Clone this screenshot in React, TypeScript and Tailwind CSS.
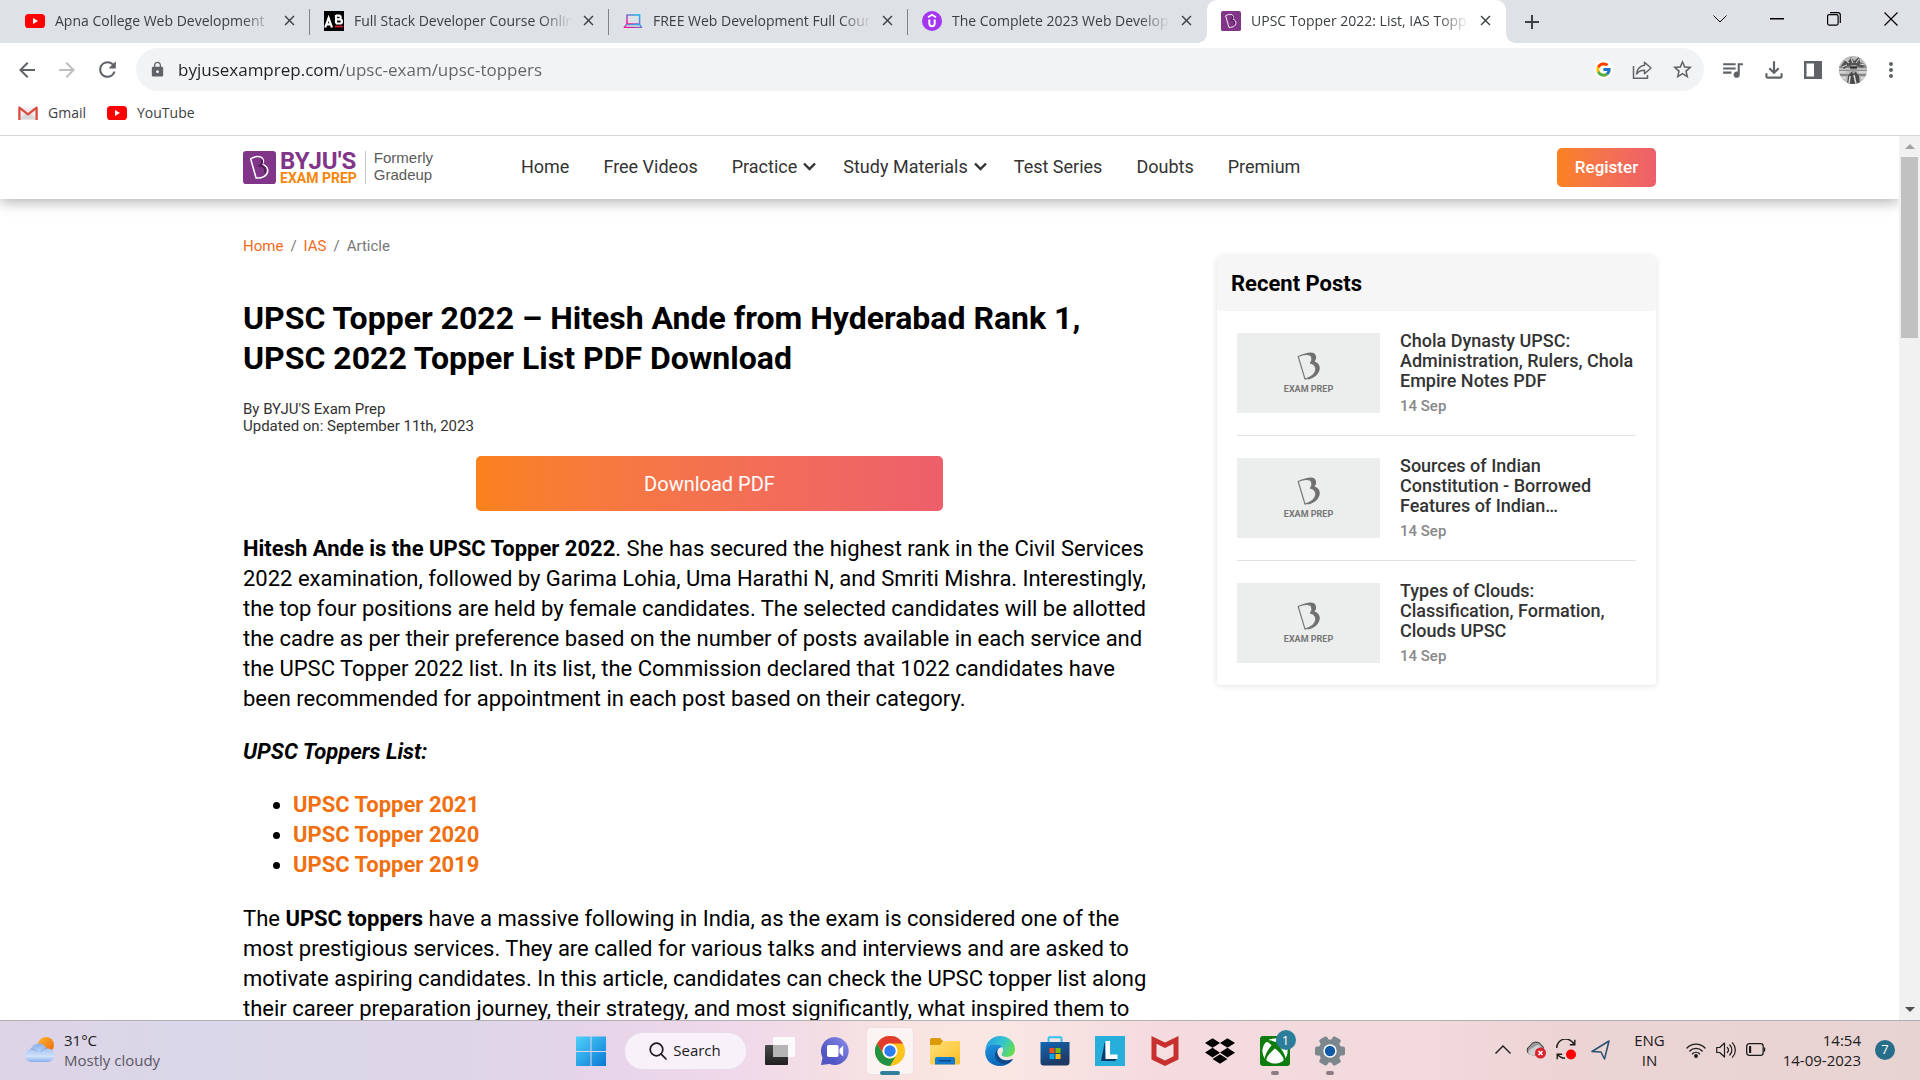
import React from "react";
import { FaXbox, FaDropbox } from "react-icons/fa";
import { FcGoogle } from "react-icons/fc";
import {
  MdArrowBack,
  MdArrowForward,
  MdRefresh,
  MdLock,
  MdStarBorder,
  MdQueueMusic,
  MdOutlineFileDownload,
  MdMoreVert,
  MdClose,
  MdAdd,
} from "react-icons/md";

/* ---------- icons ---------- */

function YouTubeIcon() {
  return (
    <svg width="20" height="20" viewBox="0 0 20 20" aria-hidden="true">
      <rect x="0" y="3" width="20" height="14" rx="3.6" fill="#ff0000" />
      <path d="M8 7v6l5-3z" fill="#fff" />
    </svg>
  );
}

function AppBreweryIcon() {
  return (
    <svg width="20" height="20" viewBox="0 0 20 20" aria-hidden="true">
      <rect width="20" height="20" fill="#000" />
      <path d="M1.2 16.500 4.600 7l3.400 9.500M2.600 13.400h4" fill="none" stroke="#fff" strokeWidth="2.200" />
      <path
        d="M12 4v8.600M12 4.600h3.300a1.900 1.900 0 0 1 0 3.700H12M12 8.300h3.800a2.100 2.100 0 0 1 0 4.200H12"
        fill="none"
        stroke="#fff"
        strokeWidth="2.200"
      />
      <path d="M11 14.600h8v1.800h-8z" fill="#d0202c" />
    </svg>
  );
}

function LaptopIcon() {
  return (
    <svg width="20" height="20" viewBox="0 0 20 20" fill="none" aria-hidden="true">
      <defs>
        <linearGradient id="laptop" x1="0" y1="1" x2="1" y2="0">
          <stop offset="0.1" stopColor="#f0128c" />
          <stop offset="0.5" stopColor="#7a6fd0" />
          <stop offset="1" stopColor="#12b6f0" />
        </linearGradient>
      </defs>
      <rect x="4" y="4" width="12.6" height="9" stroke="url(#laptop)" strokeWidth="1.5" />
      <path d="M3.4 13.6 1.3 16.4h17.4l-2-2.8z" stroke="url(#laptop)" strokeWidth="1.4" strokeLinejoin="round" />
    </svg>
  );
}

function UdemyIcon() {
  return (
    <svg width="20" height="20" viewBox="0 0 20 20" fill="none" stroke="#fff" aria-hidden="true">
      <circle cx="10" cy="10" r="10" fill="#a435f0" stroke="none" />
      <path d="M6 6.2 10 3.8l4 2.4" strokeWidth="1.9" />
      <path d="M7.3 8.4v4.2a2.7 2.7 0 0 0 5.4 0V8.4" strokeWidth="2" />
    </svg>
  );
}

const B_OUTLINE = "M7.4 7.6c4-2.6 9.4-3.2 11.4-.6 1.5 2 .9 4.6-.5 6.2 3.6.4 6 3.2 5.6 6.6-.5 4.4-5.400 6.800-11.200 6.400z";

function ByjusIcon({ size }: { size: number }) {
  return (
    <svg width={size} height={size} viewBox="0 0 32 32" aria-hidden="true">
      <rect width="32" height="32" rx="3" fill="#813588" />
      <path d={B_OUTLINE} fill="#813588" stroke="#fff" strokeWidth="1.5" strokeLinejoin="round" />
      <path
        d="M17.600 8c1.800 2 1 4.500-1 6.200 4.200.2 6 3.400 4.600 7"
        fill="none"
        stroke="#4f1c56"
        strokeWidth="2"
      />
    </svg>
  );
}

function GmailIcon() {
  return (
    <svg width="20" height="20" viewBox="0 0 20 20" aria-hidden="true">
      <path d="M1.500 4.500h17v12h-17z" fill="#ececec" />
      <path d="M1.500 16.500 8 10l2 1.500 2-1.500 6.500 6.500z" fill="#d8d8d8" />
      <path d="M1.400 17V4.600L10 11.400l8.600-6.800V17" fill="none" stroke="#dc4b3e" strokeWidth="2.300" strokeLinejoin="round" />
    </svg>
  );
}

function ShareIcon() {
  return (
    <svg width="22" height="22" viewBox="0 0 22 22" fill="none" stroke="#5f6368" strokeWidth="1.500" strokeLinejoin="round" aria-hidden="true">
      <path d="M2.500 7v12.300h14V16" />
      <path d="M13.500 3.200 20 9l-6.500 5.800v-3.500c-3.600 0-6 1-8 3.700.500-4.200 3-8 8-8.700z" />
    </svg>
  );
}

function SidePanelIcon() {
  return (
    <svg width="20" height="20" viewBox="0 0 20 20" aria-hidden="true">
      <path d="M1 1h18v18H1z" fill="#5f6368" />
      <path d="M3.500 3.500H11v13H3.500z" fill="#fff" />
    </svg>
  );
}

function Avatar() {
  return (
    <svg width="28" height="28" viewBox="0 0 28 28" aria-hidden="true">
      <defs>
        <clipPath id="face">
          <circle cx="14" cy="14" r="14" />
        </clipPath>
      </defs>
      <g clipPath="url(#face)">
        <path d="M0 0h28v28H0z" fill="#bdbdbd" />
        <path d="M0 10h28v2H0zM0 14h28v1H0zM0 18h28v2H0z" fill="#8a8a8a" />
        <path d="m2 10 4-6 3 2 3-5 3 4 5-4 1 5 6 3-4 3-5-2-4 2-5-2-4 3z" fill="#565656" />
        <path d="m5 3 5 4M12 2l2 5M20 3l-3 4M8 9l-5 2M21 8l5 1" stroke="#ddd" strokeWidth="1" />
        <path d="m8 28 1-8 3-4h5l3 4 1 8z" fill="#4a4a4a" />
        <path d="M11.500 9h6v6l-3 3-3-3z" fill="#9c9c9c" />
        <path d="M11 10.500h7v2h-7z" fill="#2a2a2a" />
        <path d="M1 16h6M20 16h8M2 22h5M22 22h4" stroke="#eee" strokeWidth="1" />
        <path d="m15 19 2 9M11 20l-1 8" stroke="#ddd" strokeWidth="1.500" />
      </g>
    </svg>
  );
}

function ChevronDown() {
  return (
    <svg width="13" height="9" viewBox="0 0 13 9" fill="none" stroke="#333" strokeWidth="2.400" aria-hidden="true">
      <path d="m1 1.500 5.500 5.500L12 1.500" />
    </svg>
  );
}

function ThumbLogo() {
  return (
    <svg width="26" height="28" viewBox="0 0 26 28" aria-hidden="true">
      <path d="M5.500 3C11-.2 18.500-.6 19.500 3c1.200 2.500.5 5-1 6.500 4 1 6 4.500 5 8.500-1.300 5-6 8.300-11.500 9.500z" fill="#6f6f6f" />
      <path d="M2.200 4.500C8 1.800 14 1.500 15.500 4.500c1 2.500.3 5-1 6.700 4 .8 6 3.800 5.200 7.300-1.200 5-6.200 7.500-10.700 8.600z" fill="#eceeee" stroke="#777" strokeWidth="1.200" strokeLinejoin="round" />
    </svg>
  );
}

function WeatherIcon() {
  return (
    <svg width="32" height="28" viewBox="0 0 32 28" aria-hidden="true">
      <defs>
        <linearGradient id="sun" x1="0" y1="0" x2="1" y2="1">
          <stop offset="0" stopColor="#fcb62a" />
          <stop offset="1" stopColor="#ec6510" />
        </linearGradient>
        <linearGradient id="cloud" x1="0" y1="0" x2="0" y2="1">
          <stop offset="0" stopColor="#8fb0ea" />
          <stop offset="0.700" stopColor="#cfe2fb" />
          <stop offset="1" stopColor="#88aceb" />
        </linearGradient>
      </defs>
      <circle cx="22" cy="9" r="8" fill="url(#sun)" />
      <path d="M7.500 26a6.500 6.500 0 0 1-.8-12.900A8.600 8.600 0 0 1 22.500 12.500 6.800 6.800 0 1 1 24 26z" fill="url(#cloud)" />
      <path d="M6.700 13.100c3-.5 5 .6 6 2.400M17 16c1-2 3-3.500 5.500-3.500" fill="none" stroke="#7fa2e2" strokeWidth="1" />
    </svg>
  );
}

function StartIcon() {
  return (
    <svg width="30" height="30" viewBox="0 0 30 30" aria-hidden="true">
      <defs>
        <linearGradient id="win" x1="0" y1="0" x2="1" y2="1" gradientUnits="objectBoundingBox">
          <stop offset="0" stopColor="#4fd2fb" />
          <stop offset="1" stopColor="#0a78d4" />
        </linearGradient>
      </defs>
      <path d="M0 .5h14.500V15H0zM15.500.5H30V15H15.500zM0 16h14.500v14H0zM15.500 16H30v14H15.500z" fill="url(#win)" />
    </svg>
  );
}

function TaskViewIcon() {
  return (
    <svg width="30" height="30" viewBox="0 0 30 30" aria-hidden="true">
      <defs>
        <linearGradient id="tvd" x1="0" y1="0" x2="0" y2="1">
          <stop offset="0" stopColor="#4a4a4a" />
          <stop offset="1" stopColor="#1f1f1f" />
        </linearGradient>
      </defs>
      <rect x="0" y="9" width="23" height="20" rx="1" fill="url(#tvd)" />
      <rect x="8" y="1" width="22" height="20" rx="1" fill="#fdfdfd" fillOpacity="0.900" />
      <path d="M8 9h15v12H9a1 1 0 0 1-1-1z" fill="#b5b5b5" />
    </svg>
  );
}

function ChatIcon() {
  return (
    <svg width="30" height="30" viewBox="0 0 30 30" aria-hidden="true">
      <defs>
        <linearGradient id="chat" x1="0" y1="1" x2="1" y2="0">
          <stop offset="0.300" stopColor="#5257c4" />
          <stop offset="1" stopColor="#8a8de8" />
        </linearGradient>
      </defs>
      <path d="M15 1a14 14 0 1 1-5.500 27L1 29l1.500-7.500A14 14 0 0 1 15 1z" fill="url(#chat)" />
      <rect x="7" y="9" width="11.500" height="12" rx="1.800" fill="#fff" />
      <path d="m19.500 13 3.700-3.500v11L19.500 17z" fill="#fff" />
    </svg>
  );
}

function ChromeIcon() {
  return (
    <svg width="30" height="30" viewBox="0 0 30 30" aria-hidden="true">
      <circle cx="15" cy="15" r="15" fill="#fcc31c" />
      <path d="M2 7.500A15 15 0 0 1 28 7.500H15a7.500 7.500 0 0 0-6.500 11.200z" fill="#e33b2e" />
      <path d="M2 7.500 8.500 18.800A7.500 7.500 0 0 0 21.500 18.800L15 30A15 15 0 0 1 2 7.500z" fill="#229342" />
      <circle cx="15" cy="15" r="7.500" fill="#fff" />
      <circle cx="15" cy="15" r="5.700" fill="#2f7bf0" />
    </svg>
  );
}

function ExplorerIcon() {
  return (
    <svg width="30" height="28" viewBox="0 0 30 28" aria-hidden="true">
      <defs>
        <linearGradient id="folder" x1="0" y1="0" x2="1" y2="1">
          <stop offset="0" stopColor="#ffe07a" />
          <stop offset="1" stopColor="#fbbf24" />
        </linearGradient>
      </defs>
      <path d="M0 3a2 2 0 0 1 2-2h8l3 3h15v6H0z" fill="#dd9a08" />
      <path d="M0 8h10l3-4h16a1 1 0 0 1 1 1v21a1.500 1.500 0 0 1-1.500 1.500h-27A1.500 1.500 0 0 1 0 26z" fill="url(#folder)" />
      <path d="M5 27.500V22a2 2 0 0 1 2-2h16a2 2 0 0 1 2 2v5.500z" fill="#1279cf" />
      <path d="M9 23.800h12" stroke="#0a3e73" strokeWidth="1.200" />
    </svg>
  );
}

function EdgeIcon() {
  return (
    <svg width="30" height="30" viewBox="0 0 30 30" aria-hidden="true">
      <defs>
        <linearGradient id="edgeTop" x1="0" y1="0.200" x2="1" y2="0.600">
          <stop offset="0" stopColor="#1f9fe0" />
          <stop offset="0.550" stopColor="#35c6d0" />
          <stop offset="1" stopColor="#67dc4b" />
        </linearGradient>
        <linearGradient id="edgeLeft" x1="0" y1="0" x2="0.500" y2="1">
          <stop offset="0" stopColor="#1f96e0" />
          <stop offset="1" stopColor="#0b62b4" />
        </linearGradient>
      </defs>
      <path d="M.5 13C1.500 5.500 7.500 0 15 0c8.500 0 15 6 15 13 0 5-3.500 8-8 8-3.500 0-5.500-1.200-5.500-2.500 0-1 1.500-1.500 1.500-4C18 11 15 8.500 10.500 8.500 5.500 8.500 2 10.500.5 13z" fill="url(#edgeTop)" />
      <path d="M.3 15C.8 10.500 5 8.300 10.500 8.300c3 0 5.500 1 6.700 2.800-3.200.4-5.200 3-5.200 6.400 0 4.500 4.500 8.500 9.500 8.500 2 0 3.500-.5 5.500-1.500-2.700 3.500-7 5.500-12 5.500C6 30-.6 23.500.3 15z" fill="url(#edgeLeft)" />
      <path d="M12.500 13.500c-3 2.500-3.500 8 .5 11.800 4 3.700 10.500 3.700 14.500-1.300.500-.6 0-1.200-.8-.8-5 2.300-10.700 1-13-3-1.300-2.200-1.700-4.800-1.200-6.700z" fill="#0d4a8a" />
    </svg>
  );
}

function StoreIcon() {
  return (
    <svg width="30" height="30" viewBox="0 0 30 30" aria-hidden="true">
      <defs>
        <linearGradient id="store" x1="0" y1="0" x2="0.400" y2="1">
          <stop offset="0" stopColor="#1268b3" />
          <stop offset="1" stopColor="#1e3763" />
        </linearGradient>
      </defs>
      <path d="M8.500 7V2.500a1.200 1.200 0 0 1 1.200-1.200h10.600a1.200 1.200 0 0 1 1.200 1.200V7" fill="none" stroke="#35c1f1" strokeWidth="2" />
      <path d="M.5 6h29v20.500a3 3 0 0 1-3 3h-23a3 3 0 0 1-3-3z" fill="url(#store)" />
      <path d="M9.500 12H14.500v5H9.500z" fill="#f25022" />
      <path d="M15.500 12h5v5h-5z" fill="#7fba00" />
      <path d="M9.500 18h5v5h-5z" fill="#00a4ef" />
      <path d="M15.500 18h5v5h-5z" fill="#ffb900" />
    </svg>
  );
}

function LIcon() {
  return (
    <svg width="30" height="30" viewBox="0 0 30 30" aria-hidden="true">
      <path d="M0 0h30v30H0z" fill="#27aedb" />
      <path d="m10 5-4 20h14l2-2H11z" fill="#0a3d6b" />
      <path d="M10.500 5h4.500v13.500h7.500V23h-12z" fill="#fff" />
    </svg>
  );
}

function McAfeeIcon() {
  return (
    <svg width="28" height="30" viewBox="0 0 28 30" aria-hidden="true">
      <path d="M.5 0 14 6.500 27.500 0v23.500L14 30 .5 23.500z" fill="#c7302f" />
      <path d="M5.500 7.800 14 12l8.500-4.200v12.400L14 24.500l-8.500-4.300z" fill="#f6dfe0" />
    </svg>
  );
}

function GearIcon() {
  return (
    <svg width="30" height="30" viewBox="0 0 30 30" aria-hidden="true">
      <g fill="#7b868d">
        <circle cx="15" cy="15" r="11.500" />
        <rect x="0" y="10.500" width="30" height="9" rx="2" />
        <rect x="0" y="10.500" width="30" height="9" rx="2" transform="rotate(60 15 15)" />
        <rect x="0" y="10.500" width="30" height="9" rx="2" transform="rotate(120 15 15)" />
      </g>
      <circle cx="15" cy="15" r="6.700" fill="#fff" />
      <circle cx="15" cy="15" r="5.200" fill="#0f5ba7" />
    </svg>
  );
}

function XboxTile() {
  return (
    <span className="relative flex size-[30px] items-center justify-center rounded-[3px] bg-[#107c10] text-white">
      <FaXbox size={26} />
      <span className="absolute -top-[6px] left-4 flex size-5 items-center justify-center rounded-full bg-[#2b7d99] text-[13px] leading-5">
        1
      </span>
    </span>
  );
}

/* ---------- browser chrome ---------- */

const tabs: { title: string; icon: React.ReactNode; active?: boolean }[] = [
  { title: "Apna College Web Development", icon: <YouTubeIcon /> },
  { title: "Full Stack Developer Course Online", icon: <AppBreweryIcon /> },
  { title: "FREE Web Development Full Course", icon: <LaptopIcon /> },
  { title: "The Complete 2023 Web Developer", icon: <UdemyIcon /> },
  { title: "UPSC Topper 2022: List, IAS Toppers", icon: <ByjusIcon size={20} />, active: true },
];

function TabStrip() {
  return (
    <div className="flex h-[43px] shrink-0 items-stretch bg-[#dee1e6] pl-[11px]">
      <div role="tablist" className="flex min-w-0 flex-1">
        {tabs.map((t, i) => (
          <div
            key={t.title}
            role="tab"
            aria-selected={!!t.active}
            className={
              "relative flex min-w-0 max-w-[299px] flex-1 items-center pb-[2px] pl-[14px] pr-3 " +
              (t.active ? "rounded-t-[10px] bg-white" : "")
            }
          >
            {t.active && (
              <>
                <span className="absolute -left-[10px] bottom-0 size-[10px] bg-[radial-gradient(circle_at_0_0,transparent_10px,#fff_10px)]" />
                <span className="absolute -right-[10px] bottom-0 size-[10px] bg-[radial-gradient(circle_at_100%_0,transparent_10px,#fff_10px)]" />
              </>
            )}
            <span className="shrink-0">{t.icon}</span>
            <span className="ml-[10px] min-w-0 flex-1 overflow-hidden whitespace-nowrap text-sm text-[#3c4043] [mask-image:linear-gradient(to_right,#000_86%,transparent)]">
              {t.title}
            </span>
            <button aria-label={"Close " + t.title} className="ml-2 shrink-0 text-[#3c4043]">
              <MdClose size={17} />
            </button>
            {i < 3 && <span className="absolute right-0 top-[9px] h-[26px] w-px bg-[#808387]" />}
          </div>
        ))}
        <button aria-label="New tab" className="ml-[14px] text-[#3c4043]">
          <MdAdd size={24} />
        </button>
      </div>
      <div className="flex h-[38px] pr-px text-black">
        <button aria-label="Search tabs" className="flex w-[57px] items-center justify-center">
          <svg width="14" height="8" viewBox="0 0 14 8" fill="none" stroke="currentColor" aria-hidden="true">
            <path d="m.5.5 6.500 6.500L13.500.5" />
          </svg>
        </button>
        <button aria-label="Minimize" className="flex w-[57px] items-center justify-center">
          <svg width="14" height="2" viewBox="0 0 14 2" aria-hidden="true">
            <path d="M0 0h14v1.500H0z" />
          </svg>
        </button>
        <button aria-label="Restore" className="flex w-[57px] items-center justify-center">
          <svg width="14" height="14" viewBox="0 0 14 14" fill="none" stroke="currentColor" strokeWidth="1.200" aria-hidden="true">
            <rect x=".6" y="2.600" width="10.500" height="10.500" rx="1.500" />
            <path d="M3 .6h8a2.200 2.200 0 0 1 2.300 2.200V11" />
          </svg>
        </button>
        <button aria-label="Close window" className="flex w-[57px] items-center justify-center">
          <svg width="14" height="14" viewBox="0 0 14 14" fill="none" stroke="currentColor" strokeWidth="1.200" aria-hidden="true">
            <path d="m.5.5 13 13M13.500.5l-13 13" />
          </svg>
        </button>
      </div>
    </div>
  );
}

function Toolbar() {
  return (
    <div className="flex h-[53px] shrink-0 items-center bg-white pl-[15px] pr-[21px] text-[#5f6368]">
      <div className="flex gap-4 pr-4">
        <button aria-label="Back">
          <MdArrowBack size={24} />
        </button>
        <button aria-label="Forward" className="text-[#bcbec1]">
          <MdArrowForward size={24} />
        </button>
        <button aria-label="Reload">
          <MdRefresh size={25} />
        </button>
      </div>
      <div className="flex h-[43px] flex-1 items-center rounded-full bg-[#f1f3f4] pl-[13px] pr-[10px]">
        <MdLock size={17} className="shrink-0" />
        <input
          aria-label="Address"
          defaultValue="byjusexamprep.com/upsc-exam/upsc-toppers"
          className="ml-3 min-w-0 flex-1 bg-[linear-gradient(90deg,#202124_163px,#5f6368_163px)] bg-clip-text text-[17px] text-transparent outline-none"
        />
        <div className="flex items-center gap-[18px]">
          <button aria-label="Google" className="rounded-full bg-white p-px">
            <FcGoogle size={17} />
          </button>
          <button aria-label="Share">
            <ShareIcon />
          </button>
          <button aria-label="Bookmark">
            <MdStarBorder size={23} />
          </button>
        </div>
      </div>
      <div className="flex items-center gap-4 pl-4">
        <button aria-label="Media">
          <MdQueueMusic size={25} />
        </button>
        <button aria-label="Downloads">
          <MdOutlineFileDownload size={26} />
        </button>
        <button aria-label="Side panel">
          <SidePanelIcon />
        </button>
        <button aria-label="Profile">
          <Avatar />
        </button>
        <button aria-label="Menu" className="flex w-4 justify-center">
          <MdMoreVert size={24} className="shrink-0" />
        </button>
      </div>
    </div>
  );
}

function BookmarksBar() {
  return (
    <div className="flex h-10 shrink-0 items-center gap-[21px] border-b border-[#d5d7da] bg-white pb-[6px] pl-[18px] text-sm text-[#3c4043]">
      <a href="#gmail" className="flex items-center gap-[10px]">
        <GmailIcon />
        Gmail
      </a>
      <a href="#youtube" className="flex items-center gap-[10px]">
        <YouTubeIcon />
        YouTube
      </a>
    </div>
  );
}

/* ---------- web page ---------- */

const nav = [
  { label: "Home" },
  { label: "Free Videos" },
  { label: "Practice", menu: true },
  { label: "Study Materials", menu: true },
  { label: "Test Series" },
  { label: "Doubts" },
  { label: "Premium" },
];

function SiteHeader() {
  return (
    <header className="relative z-10 shrink-0 bg-white shadow-[0_2px_14px_rgba(0,0,0,0.350)]">
      <div className="mx-auto flex h-[63px] max-w-[1413px] items-center">
        <a href="#top" className="flex shrink-0 items-center">
          <ByjusIcon size={33} />
          <span className="ml-1 flex flex-col">
            <span className="text-2xl font-bold leading-5 text-[#813588]">BYJU'S</span>
            <span className="text-sm font-bold leading-[14px] text-[#f7860b]">EXAM PREP</span>
          </span>
          <span className="ml-2 h-[33px] w-px bg-[#c4c4c4]" />
          <span className="ml-2 pb-1 font-['Liberation_Sans',sans-serif] text-[15px] leading-[17px] text-[#5a5a5a]">
            Formerly
            <br />
            Gradeup
          </span>
        </a>
        <nav className="ml-[88px] flex gap-[27px] whitespace-nowrap pb-[2px] text-lg text-[#333]">
          {nav.map((n) =>
            n.menu ? (
              <button key={n.label} className="flex items-center gap-[6px]">
                {n.label}
                <ChevronDown />
              </button>
            ) : (
              <a key={n.label} href="#nav" className="pr-[7px]">
                {n.label}
              </a>
            )
          )}
        </nav>
        <button className="ml-auto h-[39px] w-[99px] rounded-[5px] bg-linear-to-r from-[#fb821c] to-[#ed5f6b] text-[17px] font-medium text-white">
          Register
        </button>
      </div>
    </header>
  );
}

const posts = [
  { title: "Chola Dynasty UPSC: Administration, Rulers, Chola Empire Notes PDF", date: "14 Sep" },
  { title: "Sources of Indian Constitution - Borrowed Features of Indian…", date: "14 Sep" },
  { title: "Types of Clouds: Classification, Formation, Clouds UPSC", date: "14 Sep" },
];

function RecentPosts() {
  return (
    <aside className="mt-[57px] w-[439px] shrink-0 self-start rounded bg-white shadow-[0_1px_6px_rgba(0,0,0,0.120)]">
      <h2 className="h-[55px] rounded bg-[#f6f6f6] pl-[14px] text-[22px] font-bold leading-[55px] text-black">
        Recent Posts
      </h2>
      <ul className="px-5">
        {posts.map((p) => (
          <li key={p.title} className="border-b border-[#e2e2e2] last:border-b-0">
            <a href="#post" className="flex gap-5 py-[22px]">
              <span className="flex h-20 w-[143px] shrink-0 flex-col items-center justify-center bg-[#eceeee]">
                <ThumbLogo />
                <span className="mt-1 text-[9px] font-bold leading-[10px] text-[#777]">EXAM PREP</span>
              </span>
              <span className="-mb-1 -mt-[2px] text-lg font-medium leading-5 text-[#333]">
                {p.title}
                <span className="mt-[5px] block text-[15px] text-[#888]">{p.date}</span>
              </span>
            </a>
          </li>
        ))}
      </ul>
    </aside>
  );
}

function Article() {
  return (
    <main className="w-[933px] text-black">
      <nav aria-label="Breadcrumb" className="mt-[37px] flex gap-[7px] text-[15px] leading-5 text-[#777]">
        <a href="#home" className="text-[#f26a1b]">
          Home
        </a>
        <span>/</span>
        <a href="#ias" className="text-[#f26a1b]">
          IAS
        </a>
        <span>/</span>
        <span>Article</span>
      </nav>
      <h1 className="mt-[42px] max-w-[915px] text-[32px] font-bold leading-10">
        UPSC Topper 2022 – Hitesh Ande from Hyderabad Rank 1, UPSC 2022 Topper List PDF Download
      </h1>
      <p className="mt-[23px] text-[15px] leading-[17px] text-[#333]">
        By BYJU'S Exam Prep
        <br />
        Updated on: September 11th, 2023
      </p>
      <button className="mx-auto mt-[21px] block h-[55px] w-1/2 rounded-[5px] bg-linear-to-r from-[#fb821c] to-[#ed5f6b] text-xl text-white">
        Download PDF
      </button>
      <div className="mt-[23px] max-w-[915px] text-[22px] leading-[30px]">
        <p>
          <strong className="font-bold">Hitesh Ande is the UPSC Topper 2022</strong>. She has secured the highest rank
          in the Civil Services 2022 examination, followed by Garima Lohia, Uma Harathi N, and Smriti Mishra.
          Interestingly, the top four positions are held by female candidates. The selected candidates will be allotted
          the cadre as per their preference based on the number of posts available in each service and the UPSC Topper
          2022 list. In its list, the Commission declared that 1022 candidates have been recommended for appointment in
          each post based on their category.
        </p>
        <p className="mt-[23px] font-bold italic">UPSC Toppers List:</p>
        <ul className="mt-[23px] list-disc pl-[50px] font-bold">
          {["2021", "2020", "2019"].map((y) => (
            <li key={y}>
              <a href="#toppers" className="text-[#f07010]">
                UPSC Topper {y}
              </a>
            </li>
          ))}
        </ul>
        <p className="mt-6">
          The <strong className="font-bold">UPSC toppers</strong> have a massive following in India, as the exam is
          considered one of the most prestigious services. They are called for various talks and interviews and are
          asked to motivate aspiring candidates. In this article, candidates can check the UPSC topper list along their
          career preparation journey, their strategy, and most significantly, what inspired them to
        </p>
      </div>
    </main>
  );
}

function Scrollbar() {
  return (
    <div className="flex w-[21px] shrink-0 flex-col items-center bg-[#f1f1f1]" aria-hidden="true">
      <span className="flex h-[21px] items-center">
        <span className="border-x-[5px] border-b-[5px] border-x-transparent border-b-[#a3a3a3]" />
      </span>
      <span className="h-[181px] w-[17px] bg-[#c1c1c1]" />
      <span className="mt-auto flex h-[21px] items-center">
        <span className="border-x-[5px] border-t-[5px] border-x-transparent border-t-[#505050]" />
      </span>
    </div>
  );
}

/* ---------- taskbar ---------- */

const pinned: { label: string; icon: React.ReactNode; state?: "active" | "open" }[] = [
  { label: "Task view", icon: <TaskViewIcon /> },
  { label: "Chat", icon: <ChatIcon /> },
  { label: "Chrome", icon: <ChromeIcon />, state: "active" },
  { label: "File Explorer", icon: <ExplorerIcon /> },
  { label: "Edge", icon: <EdgeIcon /> },
  { label: "Store", icon: <StoreIcon /> },
  { label: "L", icon: <LIcon /> },
  { label: "McAfee", icon: <McAfeeIcon /> },
  { label: "Dropbox", icon: <FaDropbox size={30} color="#000" /> },
  { label: "Xbox", icon: <XboxTile />, state: "open" },
  { label: "Settings", icon: <GearIcon />, state: "open" },
];

function Tray() {
  return (
    <div className="flex items-center justify-end pb-[2px] pr-[25px] text-[#1b1b1b]">
      <button aria-label="Hidden icons" className="mr-[15px]">
        <svg width="16" height="9" viewBox="0 0 16 9" fill="none" stroke="currentColor" strokeWidth="1.400" aria-hidden="true">
          <path d="m.5 8.500 7.500-7.500 7.500 7.500" />
        </svg>
      </button>
      <button aria-label="OneDrive" className="mr-[10px]">
        <svg width="20" height="18" viewBox="0 0 20 18" aria-hidden="true">
          <path d="M4.500 13.500A4.500 4.500 0 0 1 4 5 6.500 6.500 0 0 1 15.500 4 4 4 0 0 1 17 9l-5 5z" fill="#9a9a9a" stroke="#333" />
          <path d="M2 12C4 7 8 7 11 4l4 1-6 9H4z" fill="#d0d0d0" />
          <circle cx="14.500" cy="12" r="5.500" fill="#d9232e" />
          <path d="m12.500 10 4 4m0-4-4 4" stroke="#fff" strokeWidth="1.600" />
        </svg>
      </button>
      <button aria-label="Updates" className="mr-[15px]">
        <svg width="20" height="21" viewBox="0 0 20 21" fill="none" stroke="currentColor" strokeWidth="1.400" aria-hidden="true">
          <path d="M.7 9A9 9 0 0 1 18 5.500M18.800.8v5h-5M1.200 20.200v-5h5M1.500 15.200A9 9 0 0 0 9 19.300" />
          <circle cx="15" cy="15.500" r="5" fill="#ff0000" stroke="none" />
        </svg>
      </button>
      <button aria-label="Location" className="mr-6">
        <svg width="19" height="20" viewBox="0 0 19 20" fill="none" stroke="#28516f" strokeWidth="1.500" strokeLinejoin="round" aria-hidden="true">
          <path d="M18 1 1 11.500l9 .5 3.500 7z" />
        </svg>
      </button>
      <button className="mr-[21px] text-[15px] leading-5">
        ENG
        <br />
        IN
      </button>
      <button aria-label="Network, sound and battery" className="mr-[17px] flex items-center gap-[10px]">
        <svg width="20" height="16" viewBox="0 0 20 16" fill="none" stroke="currentColor" strokeWidth="1.400" strokeLinecap="round" aria-hidden="true">
          <path d="M1 6a12.500 12.500 0 0 1 18 0M3.800 9a8.600 8.600 0 0 1 12.400 0M6.500 11.800a5 5 0 0 1 7 0" />
          <circle cx="10" cy="14" r="1.200" fill="currentColor" />
        </svg>
        <svg width="20" height="16" viewBox="0 0 20 16" fill="none" stroke="currentColor" strokeWidth="1.200" strokeLinecap="round" strokeLinejoin="round" aria-hidden="true">
          <path d="M.7 5.500v5h3L8.500 15V1L3.700 5.500zM11.300 5.500a3.600 3.600 0 0 1 0 5M13.800 3a7.200 7.200 0 0 1 0 10M16.500.8a10.500 10.500 0 0 1 0 14.400" />
        </svg>
        <svg width="20" height="13" viewBox="0 0 20 13" fill="none" stroke="currentColor" strokeWidth="1.300" aria-hidden="true">
          <rect x=".7" y=".7" width="16.500" height="11.600" rx="2.500" />
          <path d="M3 3h2.200v7H3zM18 4.500h1.200v4H18z" fill="currentColor" stroke="none" />
        </svg>
      </button>
      <button className="mr-[14px] text-right text-[15px] leading-5">
        14:54
        <br />
        14-09-2023
      </button>
      <span className="flex size-5 items-center justify-center rounded-full bg-[#266e8a] text-[13px] text-white">7</span>
    </div>
  );
}

function Taskbar() {
  return (
    <footer className="grid h-[60px] shrink-0 grid-cols-[1fr_auto_1fr] border-t border-[#b5aeb4] bg-[linear-gradient(90deg,#ddd4e6_0%,#d9d7e9_10%,#ded6e8_24%,#e6d4ea_31%,#efd8ea_38%,#f8e3e0_47%,#fae7e4_52%,#f4dbdf_60%,#f1d9dc_75%,#ecd4d4_82%,#e8d3d3_100%)] font-['Open_Sans','Noto_Sans',sans-serif]">
      <button className="flex items-center gap-2 pb-[2px] pl-6 text-left text-[15px] leading-5">
        <WeatherIcon />
        <span className="text-[#5b5662]">
          <span className="text-[#1b1b1b]">31°C</span>
          <br />
          Mostly cloudy
        </span>
      </button>
      <div className="flex items-center gap-[7px]">
        <button aria-label="Start" className="flex size-12 items-center justify-center">
          <StartIcon />
        </button>
        <button className="mx-[2px] flex h-[38px] w-[123px] items-center justify-center gap-[6px] rounded-full border border-[#e9dcea] bg-[#f8f1f9] text-[15px] text-[#1b1b1b]">
          <svg width="18" height="18" viewBox="0 0 18 18" fill="none" stroke="currentColor" strokeWidth="1.700" strokeLinecap="round" aria-hidden="true">
            <circle cx="7.500" cy="7.500" r="6.300" />
            <path d="m12.200 12.200 4.800 4.800" />
          </svg>
          Search
        </button>
        {pinned.map((p) => (
          <button
            key={p.label}
            aria-label={p.label}
            className={
              "relative flex size-12 items-center justify-center rounded-[5px] " +
              (p.state === "active" ? "border border-[#eee0e2] bg-[#fcf4f3]" : "")
            }
          >
            {p.icon}
            {p.state === "active" && <span className="absolute -bottom-px h-1 w-5 rounded-full bg-[#2f809d]" />}
            {p.state === "open" && <span className="absolute bottom-0 h-1 w-2 rounded-full bg-[#8a7c80]" />}
          </button>
        ))}
      </div>
      <Tray />
    </footer>
  );
}

export default function App() {
  return (
    <div className="flex h-screen flex-col overflow-hidden bg-white font-['Open_Sans','Noto_Sans',sans-serif]">
      <TabStrip />
      <Toolbar />
      <BookmarksBar />
      <div className="flex min-h-0 flex-1 font-[Roboto,sans-serif]">
        <div className="flex min-w-0 flex-1 flex-col overflow-hidden bg-white">
          <SiteHeader />
          <div className="min-h-0 flex-1 overflow-hidden">
            <div className="mx-auto flex max-w-[1413px] justify-between gap-6">
              <Article />
              <RecentPosts />
            </div>
          </div>
        </div>
        <Scrollbar />
      </div>
      <Taskbar />
    </div>
  );
}
